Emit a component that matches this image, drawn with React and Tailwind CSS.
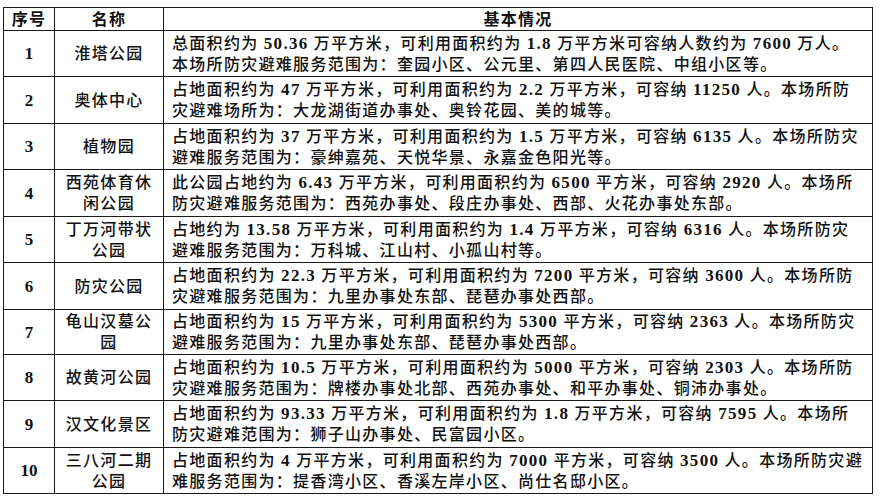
import React from "react";

const FONT = { fontFamily: "'Liberation Serif', 'Noto Sans CJK SC', serif" };

const rows = [
  {
    n: "1",
    name: ["淮塔公园"],
    h: "h-[46px]",
    lines: [
      "总面积约为 50.36 万平方米，可利用面积约为 1.8 万平方米可容纳人数约为 7600 万人。",
      "本场所防灾避难服务范围为：奎园小区、公元里、第四人民医院、中组小区等。",
    ],
  },
  {
    n: "2",
    name: ["奥体中心"],
    h: "h-[47px]",
    lines: [
      "占地面积约为 47 万平方米，可利用面积约为 2.2 万平方米，可容纳 11250 人。本场所防",
      "灾避难场所为：大龙湖街道办事处、奥铃花园、美的城等。",
    ],
  },
  {
    n: "3",
    name: ["植物园"],
    h: "h-[46px]",
    lines: [
      "占地面积约为 37 万平方米，可利用面积约为 1.5 万平方米，可容纳 6135 人。本场所防灾",
      "避难服务范围为：豪绅嘉苑、天悦华景、永嘉金色阳光等。",
    ],
  },
  {
    n: "4",
    name: ["西苑体育休", "闲公园"],
    h: "h-[47px]",
    lines: [
      "此公园占地约为 6.43 万平方米，可利用面积约为 6500 平方米，可容纳 2920 人。本场所",
      "防灾避难服务范围为：西苑办事处、段庄办事处、西部、火花办事处东部。",
    ],
  },
  {
    n: "5",
    name: ["丁万河带状", "公园"],
    h: "h-[46px]",
    lines: [
      "占地约为 13.58 万平方米，可利用面积约为 1.4 万平方米，可容纳 6316 人。本场所防灾",
      "避难服务范围为：万科城、江山村、小孤山村等。",
    ],
  },
  {
    n: "6",
    name: ["防灾公园"],
    h: "h-[47px]",
    lines: [
      "占地面积约为 22.3 万平方米，可利用面积约为 7200 平方米，可容纳 3600 人。本场所防",
      "灾避难服务范围为：九里办事处东部、琵琶办事处西部。",
    ],
  },
  {
    n: "7",
    name: ["龟山汉墓公", "园"],
    h: "h-[45px]",
    lines: [
      "占地面积约为 15 万平方米，可利用面积约为 5300 平方米，可容纳 2363 人。本场所防灾",
      "避难服务范围为：九里办事处东部、琵琶办事处西部。",
    ],
  },
  {
    n: "8",
    name: ["故黄河公园"],
    h: "h-[46px]",
    lines: [
      "占地面积约为 10.5 万平方米，可利用面积约为 5000 平方米，可容纳 2303 人。本场所防",
      "灾避难服务范围为：牌楼办事处北部、西苑办事处、和平办事处、铜沛办事处。",
    ],
  },
  {
    n: "9",
    name: ["汉文化景区"],
    h: "h-[47px]",
    lines: [
      "占地面积约为 93.33 万平方米，可利用面积约为 1.8 万平方米，可容纳 7595 人。本场所",
      "防灾避难范围为：狮子山办事处、民富园小区。",
    ],
  },
  {
    n: "10",
    name: ["三八河二期", "公园"],
    h: "h-[45px]",
    lines: [
      "占地面积约为 4 万平方米，可利用面积约为 7000 平方米，可容纳 3500 人。本场所防灾避",
      "难服务范围为：提香湾小区、香溪左岸小区、尚仕名邸小区。",
    ],
  },
];

function Line({ text }) {
  const parts = text.split(/(\d[\d.]*)/);
  return (
    <div className="whitespace-nowrap">
      {parts.map((p, i) =>
        /^\d/.test(p) ? (
          <span key={i} className="font-bold text-[17px]">
            {p}
          </span>
        ) : (
          <span key={i}>{p}</span>
        )
      )}
    </div>
  );
}

export default function App() {
  return (
    <div className="w-[882px] h-[500px] bg-white text-[#111] overflow-hidden" style={FONT}>
      <div className="pt-[7px] pl-[3px]">
        <div className="w-[870px] border border-[#1a1a1a] text-[16px] tracking-[1.3px] leading-[21px] font-medium">
          <div className="flex h-[23px] border-b border-[#1a1a1a] font-bold">
            <div className="w-[51px] shrink-0 border-r border-[#1a1a1a] flex items-center justify-center">
              序号
            </div>
            <div className="w-[109px] shrink-0 border-r border-[#1a1a1a] flex items-center justify-center">
              名称
            </div>
            <div className="flex-1 flex items-center justify-center">基本情况</div>
          </div>
          {rows.map((r, idx) => (
            <div
              key={r.n}
              className={
                "flex " + r.h + (idx < rows.length - 1 ? " border-b border-[#1a1a1a]" : "")
              }
            >
              <div className="w-[51px] shrink-0 border-r border-[#1a1a1a] flex items-center justify-center font-bold text-[17px] tracking-normal">
                {r.n}
              </div>
              <div className="w-[109px] shrink-0 border-r border-[#1a1a1a] flex flex-col items-center justify-center">
                {r.name.map((t) => (
                  <div key={t} className="whitespace-nowrap">
                    {t}
                  </div>
                ))}
              </div>
              <div className="flex-1 flex flex-col justify-center pl-[8px]">
                {r.lines.map((t, i) => (
                  <Line key={i} text={t} />
                ))}
              </div>
            </div>
          ))}
        </div>
      </div>
    </div>
  );
}
